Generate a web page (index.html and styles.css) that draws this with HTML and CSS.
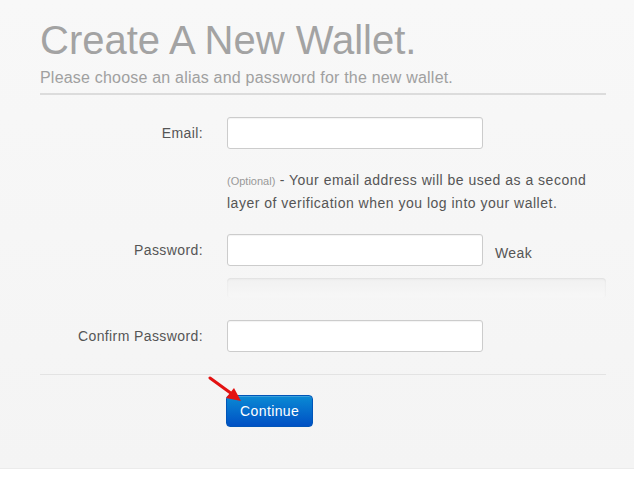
FILE: index.html
```html
<!DOCTYPE html>
<html lang="en">
<head>
  <meta charset="UTF-8" />
  <title>Create A New Wallet</title>
  <link rel="stylesheet" href="styles.css">
</head>
<body>
  <div class="page">
    <div class="wallet">
      <header class="page-header">
        <h1>Create A New Wallet.</h1>
        <p class="lead">Please choose an alias and password for the new wallet.</p>
      </header>

      <form class="form-horizontal">
        <div class="row">
          <label class="control-label" for="email">Email:</label>
          <div class="controls">
            <input type="text" id="email">
          </div>
        </div>

        <div class="row">
          <div></div>
          <p class="help">
            <small>(Optional)</small> - Your email address will be used as a second layer of verification when you log into your wallet.
          </p>
        </div>

        <div class="row">
          <label class="control-label" for="password">Password:</label>
          <div class="controls">
            <input type="password" id="password">
            <span class="strength">Weak</span>
          </div>
        </div>

        <div class="row">
          <div></div>
          <div class="progress"></div>
        </div>

        <div class="row">
          <label class="control-label" for="confirm">Confirm Password:</label>
          <div class="controls">
            <input type="password" id="confirm">
          </div>
        </div>

        <div class="form-actions">
          <button type="button" class="btn-primary">Continue</button>
          <!-- pointer annotation -->
          <svg class="arrow" width="40" height="30" viewBox="0 0 40 30">
            <line x1="2" y1="2" x2="24" y2="18" stroke="#e31212" stroke-width="3" stroke-linecap="round" />
            <polygon points="33,25 18,22 26,12" fill="#e31212" />
          </svg>
        </div>
      </form>
    </div>
  </div>
</body>
</html>
```

FILE: styles.css
```css
html, body {
  margin: 0;
  padding: 0;
  background: #fff;
  font-family: 'Liberation Sans', Arial, sans-serif;
  font-size: 14px;
  letter-spacing: 0.4px;
  color: #555;
}

.page {
  background: linear-gradient(#f8f8f8, #f4f4f4);
  border-bottom: 1px solid #ebebeb;
  height: 469px;
  box-sizing: border-box;
  padding: 0 28px 0 40px;
}

.page-header {
  border-bottom: 2px solid #dcdcdc;
  padding-bottom: 5px;
}

h1 {
  margin: 0;
  padding-top: 17px;
  font-size: 40px;
  font-weight: normal;
  letter-spacing: 0;
  line-height: 46px;
  color: #a3a3a3;
}

.lead {
  margin: 5px 0 0;
  font-size: 16px;
  letter-spacing: 0.2px;
  line-height: 20px;
  color: #a0a0a0;
}

.form-horizontal {
  padding-top: 22px;
}

.row {
  display: grid;
  grid-template-columns: 163px 1fr;
  column-gap: 24px;
}

.control-label {
  text-align: right;
  line-height: 32px;
  color: #555;
}

.controls {
  display: flex;
  align-items: center;
  gap: 12px;
}

input {
  width: 256px;
  height: 32px;
  box-sizing: border-box;
  border: 1px solid #ccc;
  border-radius: 3px;
  background: #fff;
  box-shadow: inset 0 1px 1px rgba(0, 0, 0, 0.05);
  margin: 0;
}

.strength {
  padding-top: 6px;
  color: #555;
}

.help {
  margin: 20px 6px 20px 0;
  line-height: 22px;
  letter-spacing: 0.5px;
  color: #555;
}

.help small {
  font-size: 11px;
  letter-spacing: 0;
  color: #999;
}

.progress {
  height: 20px;
  margin: 12px 0 22px;
  border-radius: 4px;
  background: linear-gradient(#f1f1f1, #f7f7f7);
  box-shadow: inset 0 1px 2px rgba(0, 0, 0, 0.08);
}

.form-actions {
  position: relative;
  margin-top: 22px;
  border-top: 1px solid #e3e3e3;
  padding: 20px 0 0 186px;
}

.btn-primary {
  height: 32px;
  padding: 0 13px;
  border: 1px solid #0055b8;
  border-radius: 4px;
  background: linear-gradient(#0a8ad4, #0050c4);
  color: #fff;
  font-family: 'Liberation Sans', Arial, sans-serif;
  font-size: 14px;
  letter-spacing: 0.4px;
  box-shadow: inset 0 1px 0 rgba(255, 255, 255, 0.2);
}

.arrow {
  position: absolute;
  left: 168px;
  top: 1px;
}
```
